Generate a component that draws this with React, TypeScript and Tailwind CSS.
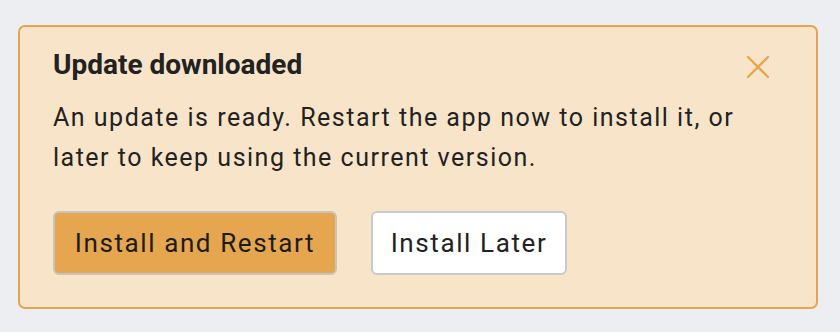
const CloseIcon = () => (
  <svg width="24" height="24" viewBox="0 0 24 24" fill="none" stroke="currentColor" strokeWidth="2.4" strokeLinecap="round">
    <line x1="2" y1="2" x2="22" y2="22" />
    <line x1="22" y1="2" x2="2" y2="22" />
  </svg>
);

const UpdateBanner = () => {
  return (
    <div className="w-[800px] h-[284px] rounded-[7px] border-2 border-[#e2a554] bg-[#f8e5c9] pl-[33px] pr-[46px] pt-[20px]">
      <div className="flex items-center justify-between h-[36px]">
        <h2 className="text-[28px] leading-[36px] font-bold text-[#222222]">
          Update downloaded
        </h2>
        <button className="flex items-center justify-center w-[24px] h-[24px] mt-[4px] text-[#e6a550]">
          <CloseIcon />
        </button>
      </div>
      <p className="mt-[15px] text-[25px] leading-[40px] text-[#222222] tracking-[1.5px]">
        An update is ready. Restart the app now to install it, or
        <br />
        later to keep using the current version.
      </p>
      <div className="flex gap-[34px] mt-[33px]">
        <button className="w-[284px] h-[64px] rounded-[6px] border-2 border-[#c6c4c0] bg-[#e6a64f] text-[26px] text-[#1c1c1c] tracking-[1.6px]">
          Install and Restart
        </button>
        <button className="w-[196px] h-[64px] rounded-[6px] border-2 border-[#c7c9cc] bg-white text-[26px] text-[#222222] tracking-[1.6px]">
          Install Later
        </button>
      </div>
    </div>
  );
};

export default function App() {
  return (
    <div
      className="w-[840px] h-[332px] bg-[#eceef1] pt-[25px] pl-[18px]"
      style={{ fontFamily: "Roboto, 'Noto Sans', sans-serif" }}
    >
      <UpdateBanner />
    </div>
  );
}
